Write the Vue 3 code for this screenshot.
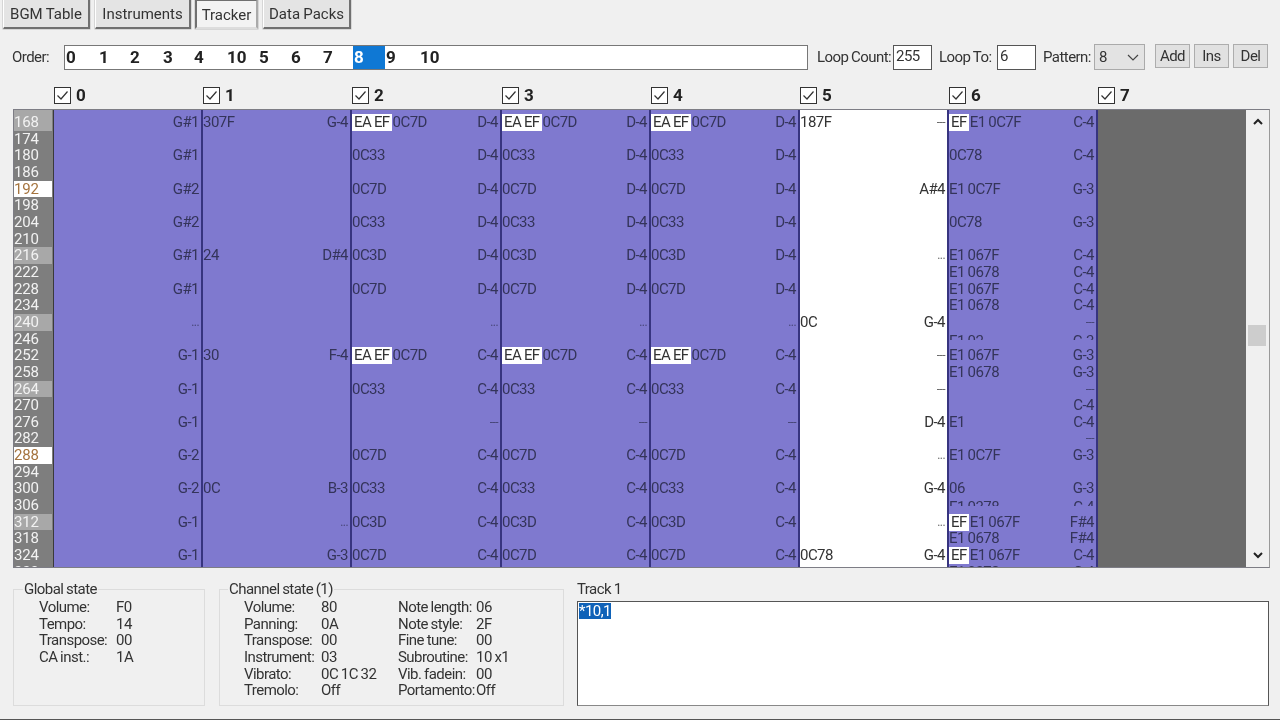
<script setup>
const tabs = [
  { label: 'BGM Table', cls: 't1' },
  { label: 'Instruments', cls: 't2' },
  { label: 'Tracker', cls: 't3 active' },
  { label: 'Data Packs', cls: 't4' }
]
const order = [[0,33],[1,31],[2,33],[3,31],[4,33],[10,32],[5,32],[6,32],[7,31],[8,32],[9,34],[10,40]]
const ROWS = 28
const indices = Array.from({ length: ROWS }, (_, i) => {
  const n = 168 + i * 6
  let cls = ''
  if (n === 192 || n === 288) cls = 'now'
  else if (n % 24 === 0) cls = 'beat'
  return { n, cls }
})
const build = (map) => Array.from({ length: ROWS }, (_, i) => {
  const v = map[i]
  if (!v) return { tag: '', fx: '', note: '', clip: false }
  const clip = v.startsWith('~')
  const [tag, fx, note] = (clip ? v.slice(1) : v).split('|')
  return { tag, fx, note, clip }
})
const mid = () => ({
  0: 'EA EF|0C7D|D-4', 2: '|0C33|D-4', 4: '|0C7D|D-4', 6: '|0C33|D-4', 8: '|0C3D|D-4', 10: '|0C7D|D-4',
  12: '||...', 14: 'EA EF|0C7D|C-4', 16: '|0C33|C-4', 18: '||---', 20: '|0C7D|C-4', 22: '|0C33|C-4', 24: '|0C3D|C-4', 26: '|0C7D|C-4'
})
const channels = [
  { name: '0', w: 'w149', rows: build({ 0:'||G#1',2:'||G#1',4:'||G#2',6:'||G#2',8:'||G#1',10:'||G#1',12:'||...',14:'||G-1',16:'||G-1',18:'||G-1',20:'||G-2',22:'||G-2',24:'||G-1',26:'||G-1' }) },
  { name: '1', w: 'w149', rows: build({ 0:'|307F|G-4',8:'|24|D#4',14:'|30|F-4',22:'|0C|B-3',24:'||...',26:'||G-3' }) },
  { name: '2', w: 'w150', rows: build(mid()) },
  { name: '3', w: 'w149', rows: build(mid()) },
  { name: '4', w: 'w149', rows: build(mid()) },
  { name: '5', w: 'w149 white', rows: build({ 0:'|187F|---',4:'||A#4',8:'||...',12:'|0C|G-4',14:'||---',16:'||---',18:'||D-4',20:'||...',22:'||G-4',24:'||...',26:'|0C78|G-4' }) },
  { name: '6', w: 'w149', rows: build({ 0:'EF|E1 0C7F|C-4',2:'|0C78|C-4',4:'|E1 0C7F|G-3',6:'|0C78|G-3',8:'|E1 067F|C-4',9:'|E1 0678|C-4',10:'|E1 067F|C-4',11:'|E1 0678|C-4',12:'||---',13:'~|E1 02|G-3',14:'|E1 067F|G-3',15:'|E1 0678|G-3',16:'||---',17:'||C-4',18:'|E1|C-4',19:'||---',20:'|E1 0C7F|G-3',22:'|06|G-3',23:'~|E1 0378|C-4',24:'EF|E1 067F|F#4',25:'|E1 0678|F#4',26:'EF|E1 067F|C-4',27:'|E1 0378|C-4' }) },
  { name: '7', w: 'w149 off', rows: [] }
]
const globalState = [['Volume:','F0'],['Tempo:','14'],['Transpose:','00'],['CA inst.:','1A']]
const chA = [['Volume:','80'],['Panning:','0A'],['Transpose:','00'],['Instrument:','03'],['Vibrato:','0C 1C 32'],['Tremolo:','Off']]
const chB = [['Note length:','06'],['Note style:','2F'],['Fine tune:','00'],['Subroutine:','10 x1'],['Vib. fadein:','00'],['Portamento:','Off']]
</script>

<template>
  <div class="app">
    <nav class="tabs">
      <button v-for="t in tabs" :key="t.label" class="tab" :class="t.cls">{{ t.label }}</button>
    </nav>

    <div class="toolbar">
      <span class="lbl order-lbl">Order:</span>
      <div class="order">
        <span v-for="(o, i) in order" :key="i" class="ord" :class="{ sel: i === 9 }" :style="{ width: o[1] + 'px' }">{{ o[0] }}</span>
      </div>
      <span class="lbl lc">Loop Count:</span>
      <div class="input i1">255</div>
      <span class="lbl lt">Loop To:</span>
      <div class="input i2">6</div>
      <span class="lbl pt">Pattern:</span>
      <div class="select">
        <span>8</span>
        <svg width="12" height="7" viewBox="0 0 12 7"><path d="M1 1l5 5 5-5" fill="none" stroke="#444" stroke-width="1.2"/></svg>
      </div>
      <button class="small first">Add</button>
      <button class="small">Ins</button>
      <button class="small">Del</button>
    </div>

    <div class="checks">
      <label v-for="c in channels" :key="c.name" class="chk" :class="c.w.split(' ')[0]">
        <svg width="17" height="17" viewBox="0 0 17 17"><rect x=".5" y=".5" width="16" height="16" fill="#fff" stroke="#333"/><path d="M3.5 8.5l3.5 3.5 6.5-7.5" fill="none" stroke="#333" stroke-width="1.2"/></svg>
        <b>{{ c.name }}</b>
      </label>
    </div>

    <div class="grid">
      <div class="idx">
        <div v-for="r in indices" :key="r.n" class="idx-row" :class="r.cls">{{ r.n }}</div>
      </div>
      <div v-for="c in channels" :key="c.name" class="ch" :class="c.w">
        <div v-for="(r, i) in c.rows" :key="i" class="cell" :class="{ clip: r.clip }">
          <span class="left"><span v-if="r.tag" class="tag">{{ r.tag }}</span><span class="fx">{{ r.fx }}</span></span>
          <span class="note" :class="{ dim: r.note === '...' || r.note === '---' }">{{ r.note }}</span>
        </div>
      </div>
      <div class="scroll">
        <svg width="12" height="8" viewBox="0 0 12 8"><path d="M2 6l4-4 4 4" fill="none" stroke="#222" stroke-width="2"/></svg>
        <div class="thumb"></div>
        <svg width="12" height="8" viewBox="0 0 12 8"><path d="M2 2l4 4 4-4" fill="none" stroke="#222" stroke-width="2"/></svg>
      </div>
    </div>

    <div class="bottom">
      <fieldset class="group g1">
        <legend>Global state</legend>
        <div class="kv" v-for="k in globalState" :key="k[0]"><span class="k">{{ k[0] }}</span><span>{{ k[1] }}</span></div>
      </fieldset>
      <fieldset class="group g2">
        <legend>Channel state (1)</legend>
        <div class="cols">
          <div class="col-a"><div class="kv" v-for="k in chA" :key="k[0]"><span class="k">{{ k[0] }}</span><span>{{ k[1] }}</span></div></div>
          <div class="col-b"><div class="kv" v-for="k in chB" :key="k[0]"><span class="k">{{ k[0] }}</span><span>{{ k[1] }}</span></div></div>
        </div>
      </fieldset>
      <div class="track">
        <div class="track-lbl">Track 1</div>
        <div class="track-box"><span class="seltext">*10,1</span></div>
      </div>
    </div>
  </div>
</template>

<style>
html, body { margin: 0; background: #f0f0f0; overflow: hidden; }
</style>

<style scoped>
.app {
  width: 1280px; height: 720px; box-sizing: border-box; overflow: hidden;
  background: #f0f0f0; color: #333; border-bottom: 1px solid #555;
  font: 15px/16.67px Roboto, "Liberation Sans", sans-serif;
  letter-spacing: -.55px; word-spacing: -.5px; filter: blur(.3px);
  display: flex; flex-direction: column;
}
button { font: inherit; color: inherit; letter-spacing: inherit; word-spacing: inherit; padding: 0; cursor: default; }

.tabs { display: flex; height: 29px; margin-top: -1px; padding-left: 3px; flex: none; }
.tab {
  height: 30px; background: #e4e4e4; border: 1px solid #fff; border-right: 2px solid #707070; border-bottom: 2px solid #707070;
  letter-spacing: 0; box-sizing: border-box; box-shadow: 0 0 0 .5px #bbb; padding-top: 1px;
}
.t1 { width: 87px; margin-right: 5px; }
.t2 { width: 96px; margin-right: 4px; }
.t3 { width: 63px; margin-right: 5px; background: #f3f3f3; border: 2px solid #707070; border-right-color: #aaa; border-bottom-color: #ddd; padding-top: 3px; }
.t4 { width: 88px; }

.toolbar { display: flex; align-items: center; height: 26px; margin-top: 16px; padding-left: 12px; flex: none; }
.lbl { white-space: nowrap; }
.order-lbl { width: 52px; }
.order {
  width: 744px; height: 25px; box-sizing: border-box; background: #fff; border: 1px solid #777;
  display: flex; font-weight: 700; font-size: 17px; line-height: 23px; color: #222; letter-spacing: 0; padding-left: 0;
}
.ord { box-sizing: border-box; padding-left: 1px; flex: none; }
.sel { background: #0f78d4; color: #fff; }
.lc { margin-left: 9px; width: 76px; }
.input { height: 25px; box-sizing: border-box; background: #fff; border: 1px solid #555; line-height: 20px; padding-left: 2px; width: 39px; }
.i2 { width: 39px; }
.lt { margin-left: 7px; width: 58px; }
.pt { margin-left: 7px; width: 51px; }
.select {
  width: 51px; height: 26px; box-sizing: border-box; background: #e3e3e3; border: 1px solid #aaa;
  display: flex; align-items: center; justify-content: space-between; padding: 0 5px 0 4px;
}
.small { width: 35px; height: 24px; margin-left: 4px; margin-top: -2px; background: #e1e1e1; border: 1px solid #adadad; box-sizing: border-box; }
.small.first { margin-left: 10px; }

.checks { display: flex; height: 25px; margin-top: 13px; padding-left: 54px; flex: none; align-items: center; font-size: 17px; }
.chk { display: flex; align-items: center; gap: 5px; font-size: 17px; color: #222; letter-spacing: 0; box-sizing: border-box; }
.chk.w149 { width: 149px; }
.chk.w150 { width: 150px; }

.grid {
  margin: 1px 10px 0 13px; height: 459px; box-sizing: border-box; border: 1px solid #7d7d85; border-right-color: #999;
  display: flex; overflow: hidden; flex: none; background: #6b6b6b;
}
.idx { width: 40px; flex: none; background: #7e7e7e; color: #f2f2f2; padding-top: 4px; box-sizing: border-box; border-right: 1px solid #3a3a3a; }
.idx-row { height: 16.67px; padding-left: 0; letter-spacing: -.2px; }
.idx-row:first-child { margin-top: -4px; padding-top: 4px; }
.beat { background: #a8a8a8; margin-right: 1px; }
.now { background: #fff; color: #a5743f; margin-right: 1px; }
.ch {
  flex: none; box-sizing: border-box; background: #7f79cf; border-right: 2px solid #37347f; padding-top: 4px;
  color: #34345a; overflow: hidden;
}
.w149 { width: 149px; }
.w150 { width: 150px; }
.ch.white { background: #fff; color: #333; }
.ch.off { background: #6b6b6b; border-right: none; width: 148px; }
.cell { height: 16.67px; display: flex; justify-content: space-between; padding: 0 2px 0 0; white-space: nowrap; }
.left { display: flex; }
.tag { background: #fff; color: #333; padding: 0 2px; margin-right: 1px; height: 17px; }
.fx { padding-left: 0; }
.clip .fx, .clip .note { height: 7px; overflow: hidden; display: block; margin-top: 2px; }
.dim { opacity: .75; font-size: 12px; }

.scroll {
  flex: 1; background: #f0f0f0; position: relative; display: flex; flex-direction: column; align-items: center;
  justify-content: space-between; padding: 8px 0;
}
.thumb { position: absolute; top: 215px; left: 2px; right: 3px; height: 21px; background: #cdcdcd; }

.bottom { display: flex; margin-top: 13px; padding-left: 13px; flex: none; }
.group { margin: 0; padding: 0; border: 1px solid #dcdcdc; box-sizing: border-box; height: 125px; min-width: 0; }
.group legend { margin-left: -16px; padding: 0 1px; line-height: 17px; }
.g1 { width: 192px; padding-left: 25px; margin-right: 14px; }
.g2 { width: 345px; padding-left: 24px; margin-right: 13px; }
.g2 legend { margin-left: -16px; }
.kv { display: flex; height: 16.67px; white-space: nowrap; margin-top: 0; }
.group > .kv:first-of-type { margin-top: 1px; }
.k { width: 77px; flex: none; }
.cols { display: flex; margin-top: 1px; }
.col-a { width: 154px; }
.col-b .k { width: 78px; }
.track { flex: 1; margin-right: 11px; margin-top: 0; }
.track-lbl { line-height: 17px; }
.track-box { height: 105px; box-sizing: border-box; background: #fff; border: 1px solid #555; border-bottom-color: #888; margin-top: 3px; padding: 1px; line-height: 16px; }
.seltext { background: #0f62b8; color: #fff; display: inline-block; }
</style>
